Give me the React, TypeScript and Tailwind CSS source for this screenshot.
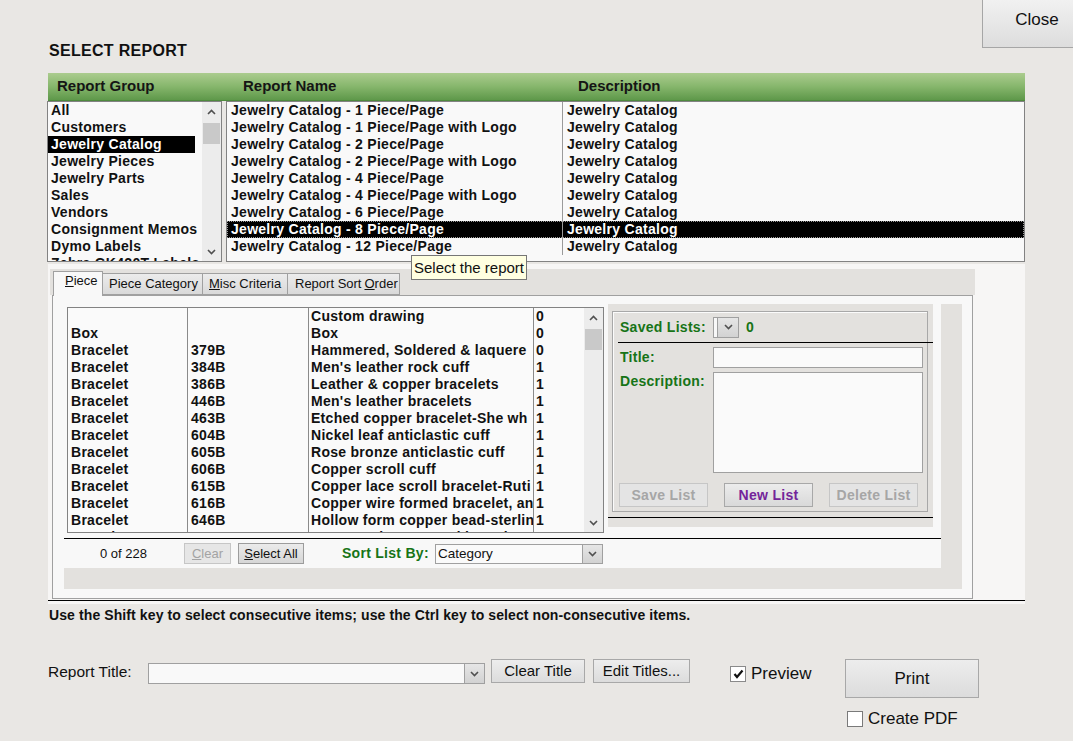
import React from "react";

const groups = [
  "All",
  "Customers",
  "Jewelry Catalog",
  "Jewelry Pieces",
  "Jewelry Parts",
  "Sales",
  "Vendors",
  "Consignment Memos",
  "Dymo Labels",
  "Zebra GK420T Labels",
];

const reports = [
  "Jewelry Catalog - 1 Piece/Page",
  "Jewelry Catalog - 1 Piece/Page with Logo",
  "Jewelry Catalog - 2 Piece/Page",
  "Jewelry Catalog - 2 Piece/Page with Logo",
  "Jewelry Catalog - 4 Piece/Page",
  "Jewelry Catalog - 4 Piece/Page with Logo",
  "Jewelry Catalog - 6 Piece/Page",
  "Jewelry Catalog - 8 Piece/Page",
  "Jewelry Catalog - 12 Piece/Page",
];

// descriptions are cut where the column ends, as the grid shows them
const pieces: [string, string, string, string][] = [
  ["", "", "Custom drawing", "0"],
  ["Box", "", "Box", "0"],
  ["Bracelet", "379B", "Hammered, Soldered & laquere", "0"],
  ["Bracelet", "384B", "Men's leather rock cuff", "1"],
  ["Bracelet", "386B", "Leather & copper bracelets", "1"],
  ["Bracelet", "446B", "Men's leather bracelets", "1"],
  ["Bracelet", "463B", "Etched copper bracelet-She wh", "1"],
  ["Bracelet", "604B", "Nickel leaf anticlastic cuff", "1"],
  ["Bracelet", "605B", "Rose bronze anticlastic cuff", "1"],
  ["Bracelet", "606B", "Copper scroll cuff", "1"],
  ["Bracelet", "615B", "Copper lace scroll bracelet-Ruti", "1"],
  ["Bracelet", "616B", "Copper wire formed bracelet, an", "1"],
  ["Bracelet", "646B", "Hollow form copper bead-sterlin", "1"],
  ["Bracelet", "650B", "Copper Wire wrapped bracelet", "1"],
];

const Chevron = ({ up = false }: { up?: boolean }) => (
  <svg width="9" height="6" viewBox="0 0 9 6">
    <polyline
      points={up ? "1,5 4.5,1.5 8,5" : "1,1 4.5,4.5 8,1"}
      fill="none"
      stroke="#505050"
      strokeWidth="1.6"
    />
  </svg>
);

// vertical scrollbar, thumb placed by flow
const ScrollBar = () => (
  <div className="w-[19px] h-full bg-[#ececec] flex flex-col items-stretch">
    <div className="h-[19px] flex items-center justify-center">
      <Chevron up />
    </div>
    <div className="mt-[2px] mx-[1px] h-[21px] bg-[#c9c9c9]" />
    <div className="flex-1" />
    <div className="h-[19px] flex items-center justify-center">
      <Chevron />
    </div>
  </div>
);

const DropButton = ({ w = "w-[20px]" }: { w?: string }) => (
  <div
    className={`${w} h-full bg-linear-to-b from-[#e6e6e6] to-[#d2d2d2] border-l border-[#a0a0a0] flex items-center justify-center`}
  >
    <Chevron />
  </div>
);

const bold14 = "text-[14px] font-bold tracking-[0.28px] leading-[17px]";

const App = () => {
  return (
    <div className="relative w-[1073px] h-[741px] overflow-hidden bg-[#e9e7e4] text-[#111] font-['Liberation_Sans',Arial,sans-serif]">
      {/* title + close */}
      <div className="flex items-start justify-between h-[61px]">
        <div className="pl-[49px] pt-[41px] text-[16px] font-bold leading-[20px] tracking-[0.3px]">
          SELECT REPORT
        </div>
        <button className="w-[91px] h-[48px] border-l border-b border-[#a6a6a6] bg-linear-to-b from-[#f1f1f1] to-[#dddddd] text-[17px] leading-[22px] pb-[8px] pl-[18px]">
          Close
        </button>
      </div>

      {/* green header */}
      <div className="mt-[12px] ml-[48px] w-[977px] h-[28px] bg-linear-to-b from-[#abcc8e] via-[#86b66c] to-[#5e984a] border-b border-[#4f8a3e] flex items-center text-[15px] font-bold text-[#151515]">
        <div className="w-[195px] pl-[9px]">Report Group</div>
        <div className="w-[335px]">Report Name</div>
        <div>Description</div>
      </div>

      {/* lists */}
      <div className="flex h-[161px]">
        <div className="ml-[47px] w-[175px] h-full border border-[#828282] bg-[#f9f9f9] flex">
          <div className="flex-1 overflow-hidden">
            {groups.map((g, i) => (
              <div
                key={g}
                className={`${bold14} h-[17px] pl-[3px] whitespace-nowrap ${
                  i === 2 ? "bg-black text-white mr-[7px]" : ""
                }`}
              >
                {g}
              </div>
            ))}
          </div>
          <ScrollBar />
        </div>

        <div className="ml-[4px] w-[799px] h-full border border-[#828282] bg-[#f9f9f9] overflow-hidden">
          {reports.map((r, i) => (
            <div
              key={r}
              className={`${bold14} h-[17px] flex whitespace-nowrap ${
                i === 7
                  ? "bg-black text-white outline-1 outline-dotted outline-[#9a9a9a] -outline-offset-1"
                  : ""
              }`}
            >
              <div className="w-[335px] pl-[4px]">{r}</div>
              <div className="border-l border-[#9a9a9a] pl-[4px]">
                Jewelry Catalog
              </div>
            </div>
          ))}
        </div>
      </div>

      {/* tab panel */}
      <div className="mt-[2px] ml-[48px] w-[977px] h-[340px] bg-[#f7f6f5] pt-[5px]">
        <div className="ml-[2px] w-[925px] h-[26px] bg-[#e3e1de] flex items-end pl-[3px] text-[13px]">
          <div className="relative z-10 -mb-px h-[25px] w-[50px] bg-[#f8f8f8] border border-b-0 border-[#a0a0a0] pl-[11px] pt-[1px] leading-[16px]">
            <span className="underline">P</span>iece
          </div>
          <div className="h-[22px] w-[100px] border border-l-0 border-[#a0a0a0] bg-linear-to-b from-[#ececec] to-[#d9d9d9] flex items-center pl-[6px]">
            Piece Category
          </div>
          <div className="h-[22px] w-[85px] border border-l-0 border-[#a0a0a0] bg-linear-to-b from-[#ececec] to-[#d9d9d9] flex items-center pl-[6px]">
            <span className="underline">M</span>isc Criteria
          </div>
          <div className="h-[22px] w-[112px] border border-l-0 border-[#a0a0a0] bg-linear-to-b from-[#ececec] to-[#d9d9d9] flex items-center pl-[7px]">
            Report Sort <span className="underline ml-[3px]">O</span>rder
          </div>
        </div>

        <div className="ml-[4px] w-[921px] h-[304px] border border-[#a0a0a0] bg-[#f8f8f8] pt-[8px] pl-[11px]">
          <div className="w-[898px] h-[285px] bg-[#e3e1de]">
            <div className="w-[877px] h-[264px] bg-[#f8f8f8] flex flex-col">
              <div className="flex h-[234px]">
                {/* pieces list */}
                <div className="ml-[3px] mt-[3px] w-[537px] h-[226px] border border-[#828282] bg-[#fafafa] flex overflow-hidden">
                  {[
                    { w: "w-[119px]", pl: "pl-[3px]", b: "" },
                    { w: "w-[121px]", pl: "pl-[3px]", b: "border-l border-[#8a8a8a]" },
                    { w: "w-[225px]", pl: "pl-[2px]", b: "border-l border-[#8a8a8a]" },
                    { w: "w-[51px]", pl: "pl-[2px]", b: "border-l border-[#8a8a8a]" },
                  ].map((c, ci) => (
                    <div key={ci} className={`${c.w} ${c.b} h-full overflow-hidden`}>
                      {pieces.map((p, ri) => (
                        <div
                          key={ri}
                          className={`${bold14} h-[17px] ${c.pl} whitespace-nowrap overflow-hidden`}
                        >
                          {p[ci]}
                        </div>
                      ))}
                    </div>
                  ))}
                  <ScrollBar />
                </div>

                {/* saved lists */}
                <div className="ml-[4px] w-[325px] h-[223px] bg-[#e3e1de] flex flex-col">
                  <div className="ml-[4px] mt-[7px] w-[316px] h-[201px] border border-[#a8a8a8] shadow-[inset_1px_1px_0_#fbfbfb] flex flex-col text-[#177417]">
                    <div className="h-[30px] flex items-center">
                      <div className={`${bold14} w-[100px] pl-[7px]`}>Saved Lists:</div>
                      <div className="w-[26px] h-[21px] border border-[#a0a0a0] bg-[#f8f8f8] flex justify-end">
                        <DropButton w="w-[21px]" />
                      </div>
                      <div className={`${bold14} ml-[7px]`}>0</div>
                    </div>
                    <div className="ml-[5px] w-[315px] h-px bg-black" />
                    <div className="mt-[4px] flex">
                      <div className={`${bold14} w-[100px] pl-[7px] leading-[21px]`}>Title:</div>
                      <div className="w-[210px] h-[21px] border border-[#a0a0a0] bg-[#fafafa]" />
                    </div>
                    <div className="mt-[4px] flex">
                      <div className={`${bold14} w-[100px] pl-[7px] leading-[18px]`}>Description:</div>
                      <div className="w-[210px] h-[101px] border border-[#a0a0a0] bg-[#fafafa]" />
                    </div>
                    <div className={`mt-[10px] ml-[6px] flex gap-[16px] ${bold14}`}>
                      <div className="w-[89px] h-[24px] border border-[#c6c6c6] bg-[#e4e4e4] text-[#a6a6a6] flex items-center justify-center">
                        Save List
                      </div>
                      <div className="w-[89px] h-[24px] border border-[#a8a8a8] bg-linear-to-b from-[#ececec] to-[#d9d9d9] text-[#74249a] flex items-center justify-center">
                        New List
                      </div>
                      <div className="w-[89px] h-[24px] border border-[#c6c6c6] bg-[#e4e4e4] text-[#a6a6a6] flex items-center justify-center">
                        Delete List
                      </div>
                    </div>
                  </div>
                  <div className="mt-[5px] h-px bg-black" />
                </div>
              </div>

              <div className="h-px bg-black" />

              <div className="h-[29px] flex items-center text-[13px]">
                <div className="ml-[36px] w-[84px]">0 of 228</div>
                <div className="w-[47px] h-[21px] border border-[#c6c6c6] bg-[#e6e6e6] text-[#a3a3a3] flex items-center justify-center">
                  <span className="underline">C</span>lear
                </div>
                <div className="ml-[7px] w-[66px] h-[21px] border border-[#9c9c9c] bg-linear-to-b from-[#ebebeb] to-[#d6d6d6] flex items-center justify-center">
                  <span className="underline">S</span>elect All
                </div>
                <div className={`${bold14} ml-[38px] w-[93px] text-[#177417]`}>Sort List By:</div>
                <div className="w-[168px] h-[20px] border border-[#a0a0a0] bg-[#fafafa] flex">
                  <div className="flex-1 pl-[2px] text-[13.5px] leading-[18px]">Category</div>
                  <DropButton />
                </div>
              </div>
            </div>
          </div>
        </div>

        <div className="mt-px h-px bg-black" />
      </div>

      {/* hint */}
      <div className="mt-[3px] ml-[49px] text-[14px] font-bold leading-[16px] tracking-[0.1px]">
        Use the Shift key to select consecutive items; use the Ctrl key to select non-consecutive items.
      </div>

      {/* bottom controls */}
      <div className="mt-[36px] ml-[48px] flex items-start">
        <div className="w-[100px] h-[24px] mt-px text-[15.5px] leading-[24px]">Report Title:</div>
        <div className="mt-[4px] w-[337px] h-[21px] border border-[#a0a0a0] bg-[#f9f9f9] flex justify-end">
          <DropButton />
        </div>
        <button className="ml-[6px] w-[94px] h-[24px] border border-[#a8a8a8] bg-linear-to-b from-[#ededed] to-[#dcdcdc] text-[15px] leading-[20px]">
          Clear Title
        </button>
        <button className="ml-[8px] w-[97px] h-[24px] border border-[#a8a8a8] bg-linear-to-b from-[#ededed] to-[#dcdcdc] text-[15px] leading-[20px]">
          Edit Titles...
        </button>
        <div className="ml-[40px] mt-[6px] w-[115px] flex items-center gap-[5px]">
          <div className="w-[16px] h-[16px] border border-[#8a8a8a] bg-white flex items-center justify-center">
            <svg width="11" height="10" viewBox="0 0 11 10">
              <polyline points="1.5,5 4,8 9.5,1.5" fill="none" stroke="#111" strokeWidth="2.2" />
            </svg>
          </div>
          <span className="text-[17px] leading-[18px]">Preview</span>
        </div>
        <div className="flex flex-col">
          <button className="w-[134px] h-[39px] border border-[#a8a8a8] bg-linear-to-b from-[#ededed] to-[#dcdcdc] text-[17px]">
            Print
          </button>
          <div className="mt-[12px] ml-[2px] flex items-center gap-[5px]">
            <div className="w-[16px] h-[16px] border border-[#7a7a7a] bg-white" />
            <span className="text-[17px] leading-[18px]">Create PDF</span>
          </div>
        </div>
      </div>

      {/* tooltip */}
      <div className="absolute left-[411px] top-[255px] w-[116px] h-[25px] border border-[#767676] bg-[#ffffe1] text-[15px] leading-[23px] text-center">
        Select the report
      </div>
    </div>
  );
};

export default App;
